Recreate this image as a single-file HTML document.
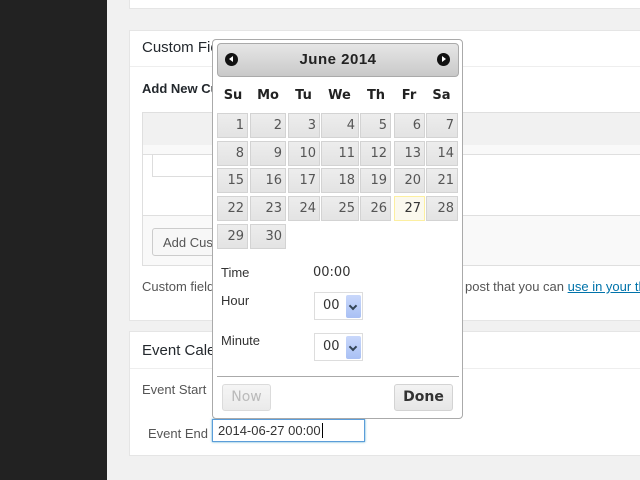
<!DOCTYPE html>
<html><head><meta charset="utf-8"><style>
*{margin:0;padding:0;box-sizing:border-box}
html,body{width:640px;height:480px;overflow:hidden}
body{background:#f1f1f1;font-family:"Liberation Sans",sans-serif;position:relative}
.a{position:absolute}
.side{left:0;top:0;width:107px;height:480px;background:#222}
.panel{background:#fff;border:1px solid #e5e5e5;border-right:0;left:129px;width:511px}
.t{font-size:15px;color:#23282d;white-space:nowrap}
.s{font-size:13px;color:#555;white-space:nowrap}
.dp{left:212px;top:39px;width:251px;height:380px;background:#fff;border:1px solid #aaa;border-radius:4px}
.hd{left:217px;top:43px;width:242px;height:34px;border:1px solid #aaa;border-radius:4px;background:linear-gradient(#e6e6e6,#c9c9c9);text-align:center;font-size:15px;font-weight:bold;color:#222;line-height:32px;letter-spacing:.5px}
.nav{top:53px;width:13px;height:13px;border-radius:50%;background:#111}
.dh{top:88px;font-size:13px;font-weight:bold;color:#222;font-family:"DejaVu Sans",sans-serif;text-align:center}
.c{border:1px solid #d3d3d3;background:linear-gradient(#ededed,#e3e3e3);font-size:13px;color:#555;text-align:right;padding-right:3px;line-height:23px;font-family:"DejaVu Sans",sans-serif}
.c.today{border-color:#fcefa1;background:#fbf9ee;color:#363636}
.sel{width:49px;height:28px;border:1px solid #ddd;background:#fff}
.sel span{position:absolute;left:8px;top:5px;font-size:13px;color:#333;font-family:"DejaVu Sans",sans-serif}
.sel i{position:absolute;right:1px;top:2px;width:15px;height:23px;background:linear-gradient(#c9d8fb,#a9c0f4);border-radius:2px}
.sel i:after{content:"";position:absolute;left:4px;top:8px;width:4px;height:4px;border-right:2px solid #345;border-bottom:2px solid #345;transform:rotate(45deg)}
.btn{height:27px;border:1px solid #d3d3d3;border-radius:3px;background:linear-gradient(#f3f3f3,#e6e6e6);font-size:14px;text-align:center;line-height:25px;font-family:"DejaVu Sans",sans-serif}
</style></head><body>
<div class="a side"></div>
<div class="a panel" style="top:-2px;height:11px"></div>
<div class="a panel" style="top:30px;height:291px"></div>
<div class="a" style="left:130px;top:66px;width:510px;height:1px;background:#eee"></div>
<div class="a t" style="left:142px;top:39px">Custom Fields</div>
<div class="a t" style="left:142px;top:81px;font-size:13px;font-weight:bold">Add New Custom Field:</div>
<div class="a" style="left:142px;top:112px;width:498px;height:154px;border:1px solid #dfdfdf;border-right:0;background:#f9f9f9"></div>
<div class="a" style="left:143px;top:113px;width:497px;height:32px;background:#f1f1f1"></div>
<div class="a" style="left:143px;top:154px;width:497px;height:62px;background:#fff;border-top:1px solid #dfdfdf;border-bottom:1px solid #dfdfdf"></div>
<div class="a" style="left:152px;top:154px;width:70px;height:23px;border:1px solid #ddd;background:#fff"></div>
<div class="a" style="left:152px;top:228px;width:90px;height:28px;border:1px solid #ccc;border-radius:3px;background:#f7f7f7;font-size:13px;color:#555;padding:6px 10px;white-space:nowrap;overflow:hidden">Add Custom Field</div>
<div class="a s" style="left:142px;top:279px;width:498px;overflow:hidden">Custom fields can be used<span style="position:absolute;left:323px">post that you can <span style="color:#0073aa;text-decoration:underline">use in your theme</span>.</span></div>
<div class="a panel" style="top:331px;height:125px"></div>
<div class="a" style="left:130px;top:368px;width:510px;height:1px;background:#eee"></div>
<div class="a t" style="left:142px;top:342px">Event Calendar</div>
<div class="a s" style="left:142px;top:382px">Event Start</div>
<div class="a s" style="left:148px;top:426px">Event End</div>
<div class="a" style="left:212px;top:419px;width:153px;height:23px;border:1px solid #5b9dd9;background:#fff;box-shadow:0 0 2px rgba(30,140,190,.8);font-size:13px;color:#333;padding:3px 5px;white-space:nowrap">2014-06-27 00:00<span style="border-left:1px solid #000;margin-left:1px"></span></div>

<div class="a dp"></div>
<div class="a hd">June 2014</div>
<div class="a nav" style="left:225px"></div>
<div class="a nav" style="left:437px"></div>
<div class="a" style="left:229px;top:56px;border:3.5px solid transparent;border-right:4px solid #fff;border-left:0"></div>
<div class="a" style="left:442px;top:56px;border:3.5px solid transparent;border-left:4px solid #fff;border-right:0"></div>

<div class="a dh" style="left:218px;width:30px">Su</div>
<div class="a dh" style="left:250px;width:36px">Mo</div>
<div class="a dh" style="left:288px;width:31px">Tu</div>
<div class="a dh" style="left:321px;width:37px">We</div>
<div class="a dh" style="left:361px;width:30px">Th</div>
<div class="a dh" style="left:394px;width:30px">Fr</div>
<div class="a dh" style="left:426px;width:31px">Sa</div>

<div id="g"></div>
<script>
var xs=[[217,31],[250,36],[288,32],[321,38],[360,31],[394,31],[426,32]],ys=[113,141,168,196,224],h='';
for(var d=1;d<=30;d++){var i=d-1,r=Math.floor(i/7),c=i%7;
h+='<div class="a c'+(d==27?' today':'')+'" style="left:'+xs[c][0]+'px;top:'+ys[r]+'px;width:'+xs[c][1]+'px;height:25px">'+d+'</div>';}
document.getElementById('g').innerHTML=h;
</script>

<div class="a s" style="left:221px;top:265px;color:#333">Time</div>
<div class="a s" style="left:313px;top:265px;color:#333;font-family:'DejaVu Sans',sans-serif">00:00</div>
<div class="a s" style="left:221px;top:293px;color:#333">Hour</div>
<div class="a s" style="left:221px;top:333px;color:#333">Minute</div>
<div class="a sel" style="left:314px;top:292px"><span>00</span><i></i></div>
<div class="a sel" style="left:314px;top:333px"><span>00</span><i></i></div>
<div class="a" style="left:217px;top:376px;width:242px;height:1px;background:#aaa"></div>
<div class="a btn" style="left:222px;top:384px;width:49px;color:#aaa;opacity:.8">Now</div>
<div class="a btn" style="left:394px;top:384px;width:59px;color:#333;font-weight:bold">Done</div>
</body></html>
